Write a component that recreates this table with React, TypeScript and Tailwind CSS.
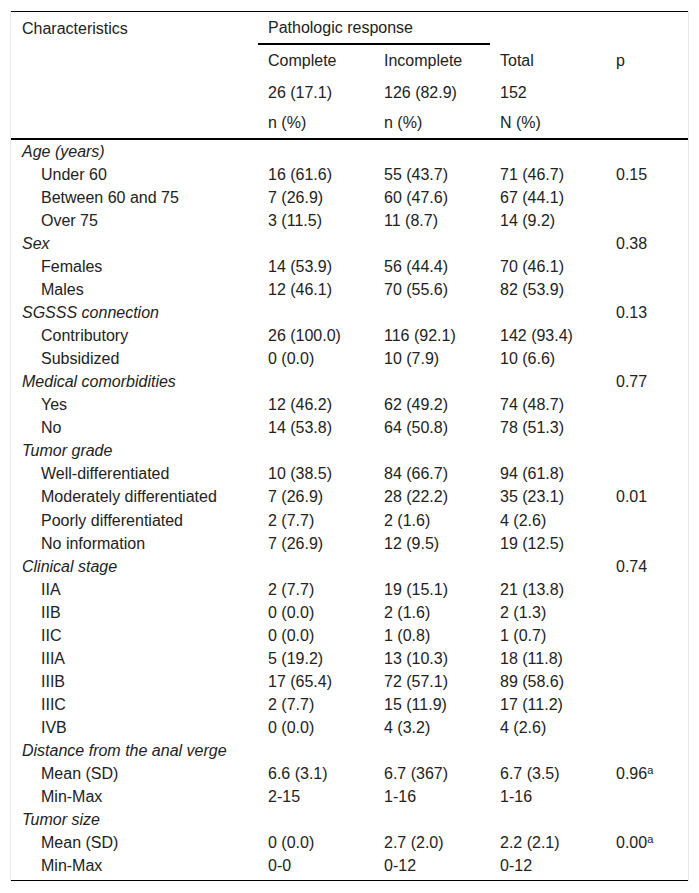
type Row = {
  label: string
  group?: boolean
  c?: string
  i?: string
  t?: string
  p?: string
  sup?: boolean
}

const rows: Row[] = [
  { label: "Age (years)", group: true },
  { label: "Under 60", c: "16 (61.6)", i: "55 (43.7)", t: "71 (46.7)", p: "0.15" },
  { label: "Between 60 and 75", c: "7 (26.9)", i: "60 (47.6)", t: "67 (44.1)" },
  { label: "Over 75", c: "3 (11.5)", i: "11 (8.7)", t: "14 (9.2)" },
  { label: "Sex", group: true, p: "0.38" },
  { label: "Females", c: "14 (53.9)", i: "56 (44.4)", t: "70 (46.1)" },
  { label: "Males", c: "12 (46.1)", i: "70 (55.6)", t: "82 (53.9)" },
  { label: "SGSSS connection", group: true, p: "0.13" },
  { label: "Contributory", c: "26 (100.0)", i: "116 (92.1)", t: "142 (93.4)" },
  { label: "Subsidized", c: "0 (0.0)", i: "10 (7.9)", t: "10 (6.6)" },
  { label: "Medical comorbidities", group: true, p: "0.77" },
  { label: "Yes", c: "12 (46.2)", i: "62 (49.2)", t: "74 (48.7)" },
  { label: "No", c: "14 (53.8)", i: "64 (50.8)", t: "78 (51.3)" },
  { label: "Tumor grade", group: true },
  { label: "Well-differentiated", c: "10 (38.5)", i: "84 (66.7)", t: "94 (61.8)" },
  { label: "Moderately differentiated", c: "7 (26.9)", i: "28 (22.2)", t: "35 (23.1)", p: "0.01" },
  { label: "Poorly differentiated", c: "2 (7.7)", i: "2 (1.6)", t: "4 (2.6)" },
  { label: "No information", c: "7 (26.9)", i: "12 (9.5)", t: "19 (12.5)" },
  { label: "Clinical stage", group: true, p: "0.74" },
  { label: "IIA", c: "2 (7.7)", i: "19 (15.1)", t: "21 (13.8)" },
  { label: "IIB", c: "0 (0.0)", i: "2 (1.6)", t: "2 (1.3)" },
  { label: "IIC", c: "0 (0.0)", i: "1 (0.8)", t: "1 (0.7)" },
  { label: "IIIA", c: "5 (19.2)", i: "13 (10.3)", t: "18 (11.8)" },
  { label: "IIIB", c: "17 (65.4)", i: "72 (57.1)", t: "89 (58.6)" },
  { label: "IIIC", c: "2 (7.7)", i: "15 (11.9)", t: "17 (11.2)" },
  { label: "IVB", c: "0 (0.0)", i: "4 (3.2)", t: "4 (2.6)" },
  { label: "Distance from the anal verge", group: true },
  { label: "Mean (SD)", c: "6.6 (3.1)", i: "6.7 (367)", t: "6.7 (3.5)", p: "0.96", sup: true },
  { label: "Min-Max", c: "2-15", i: "1-16", t: "1-16" },
  { label: "Tumor size", group: true },
  { label: "Mean (SD)", c: "0 (0.0)", i: "2.7 (2.0)", t: "2.2 (2.1)", p: "0.00", sup: true },
  { label: "Min-Max", c: "0-0", i: "0-12", t: "0-12" },
]

function HeadRow({ h, cells }: { h: string; cells: React.ReactNode[] }) {
  return (
    <div className={`flex ${h}`}>
      <div className="w-[247px] pl-[11px] flex items-center">{cells[0]}</div>
      <div className="w-[116px] pl-[10px] flex items-center">{cells[1]}</div>
      <div className="w-[116px] pl-[10px] flex items-center">{cells[2]}</div>
      <div className="w-[116px] pl-[10px] flex items-center">{cells[3]}</div>
      <div className="flex-1 pl-[10px] flex items-center">{cells[4]}</div>
    </div>
  )
}

export default function App() {
  return (
    <div className="bg-white w-[699px] h-[893px] pt-[11px] pl-[10px] text-[16px] leading-[20px] text-[#222] font-['Liberation_Sans',Arial,sans-serif]">
      <div className="w-[679px] border-x border-[#e9e9e9]">
        <div className="border-t border-black">
          {/* header */}
          <div className="flex h-[33px]">
            <div className="w-[247px] pl-[11px] flex items-center">Characteristics</div>
            <div className="w-[232px] pl-[10px] flex items-center border-b-2 border-black">
              Pathologic response
            </div>
            <div className="flex-1" />
          </div>
          <HeadRow h="h-[32px]" cells={["", "Complete", "Incomplete", "Total", "p"]} />
          <HeadRow h="h-[31px]" cells={["", "26 (17.1)", "126 (82.9)", "152", ""]} />
          <HeadRow h="h-[30px]" cells={["", "n (%)", "n (%)", "N (%)", ""]} />
          <div className="border-b-2 border-black" />

          {/* body */}
          <div className="pb-[2px] border-b border-black">
            {rows.map((r, idx) => (
              <div key={idx} className="flex h-[23.07px] items-center">
                <div className={`w-[247px] ${r.group ? "pl-[11px] italic" : "pl-[30px]"}`}>
                  {r.label}
                </div>
                <div className="w-[116px] pl-[10px]">{r.c}</div>
                <div className="w-[116px] pl-[10px]">{r.i}</div>
                <div className="w-[116px] pl-[10px]">{r.t}</div>
                <div className="flex-1 pl-[10px]">
                  {r.p}
                  {r.sup && <sup className="text-[11px]">a</sup>}
                </div>
              </div>
            ))}
          </div>
        </div>
      </div>
    </div>
  )
}
